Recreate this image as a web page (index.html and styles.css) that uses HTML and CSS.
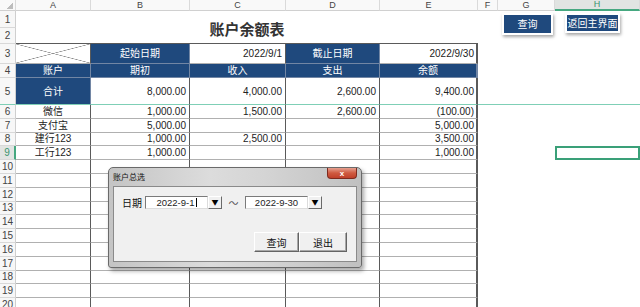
FILE: index.html
```html
<!DOCTYPE html>
<html lang="zh-CN">
  <head>
    <meta charset="UTF-8" />
    <meta name="viewport" content="width=device-width, initial-scale=1.0" />
    <title>账户余额表</title>
    <link rel="stylesheet" href="styles.css">
  </head>
  <body>
    <div class="book">
      <table class="sheet">
        <colgroup>
          <col class="w-hd"><col class="w-a"><col class="w-b"><col class="w-c"><col class="w-d"><col class="w-e"><col class="w-f"><col class="w-g"><col class="w-h">
        </colgroup>
        <tr class="r-head">
          <th class="corner"></th><th>A</th><th>B</th><th>C</th><th>D</th><th>E</th><th>F</th><th>G</th><th class="col-active">H</th>
        </tr>
        <tr class="r1"><th>1</th><td class="title" colspan="5" rowspan="2">账户余额表</td><td></td><td></td><td></td></tr>
        <tr class="r2"><th>2</th><td></td><td></td><td></td></tr>
        <tr class="r3"><th>3</th><td class="c diag"></td><td class="c blue">起始日期</td><td class="c num">2022/9/1</td><td class="c blue">截止日期</td><td class="c e num">2022/9/30</td><td></td><td></td><td></td></tr>
        <tr class="r4"><th>4</th><td class="c blue">账户</td><td class="c blue">期初</td><td class="c blue">收入</td><td class="c blue">支出</td><td class="c e blue">余额</td><td></td><td></td><td></td></tr>
        <tr class="r5"><th>5</th><td class="c blue">合计</td><td class="c num">8,000.00</td><td class="c num">4,000.00</td><td class="c num">2,600.00</td><td class="c e num">9,400.00</td><td></td><td></td><td></td></tr>
        <tr class="r"><th>6</th><td class="c ctr">微信</td><td class="c num">1,000.00</td><td class="c num">1,500.00</td><td class="c num">2,600.00</td><td class="c e num">(100.00)</td><td></td><td></td><td></td></tr>
        <tr class="r"><th>7</th><td class="c ctr">支付宝</td><td class="c num">5,000.00</td><td class="c num"></td><td class="c num"></td><td class="c e num">5,000.00</td><td></td><td></td><td></td></tr>
        <tr class="r"><th>8</th><td class="c ctr">建行123</td><td class="c num">1,000.00</td><td class="c num">2,500.00</td><td class="c num"></td><td class="c e num">3,500.00</td><td></td><td></td><td></td></tr>
        <tr class="r"><th class="row-active">9</th><td class="c ctr">工行123</td><td class="c num">1,000.00</td><td class="c num"></td><td class="c num"></td><td class="c e num">1,000.00</td><td></td><td></td><td class="sel"></td></tr>
        <tr class="r"><th>10</th><td class="c"></td><td class="c"></td><td class="c"></td><td class="c"></td><td class="c e"></td><td></td><td></td><td></td></tr>
        <tr class="r"><th>11</th><td class="c"></td><td class="c"></td><td class="c"></td><td class="c"></td><td class="c e"></td><td></td><td></td><td></td></tr>
        <tr class="r"><th>12</th><td class="c"></td><td class="c"></td><td class="c"></td><td class="c"></td><td class="c e"></td><td></td><td></td><td></td></tr>
        <tr class="r"><th>13</th><td class="c"></td><td class="c"></td><td class="c"></td><td class="c"></td><td class="c e"></td><td></td><td></td><td></td></tr>
        <tr class="r"><th>14</th><td class="c"></td><td class="c"></td><td class="c"></td><td class="c"></td><td class="c e"></td><td></td><td></td><td></td></tr>
        <tr class="r"><th>15</th><td class="c"></td><td class="c"></td><td class="c"></td><td class="c"></td><td class="c e"></td><td></td><td></td><td></td></tr>
        <tr class="r"><th>16</th><td class="c"></td><td class="c"></td><td class="c"></td><td class="c"></td><td class="c e"></td><td></td><td></td><td></td></tr>
        <tr class="r"><th>17</th><td class="c"></td><td class="c"></td><td class="c"></td><td class="c"></td><td class="c e"></td><td></td><td></td><td></td></tr>
        <tr class="r"><th>18</th><td class="c"></td><td class="c"></td><td class="c"></td><td class="c"></td><td class="c e"></td><td></td><td></td><td></td></tr>
        <tr class="r"><th>19</th><td class="c"></td><td class="c"></td><td class="c"></td><td class="c"></td><td class="c e"></td><td></td><td></td><td></td></tr>
        <tr class="r"><th>20</th><td class="c"></td><td class="c"></td><td class="c"></td><td class="c"></td><td class="c e"></td><td></td><td></td><td></td></tr>
      </table>

      <button class="sheet-btn btn-query">查询</button>
      <button class="sheet-btn btn-home">返回主界面</button>

      <div class="dialog">
        <div class="dlg-title">
          <span>账户总选</span>
          <button class="dlg-close">x</button>
        </div>
        <div class="dlg-body">
          <div class="date-row">
            <span class="lbl">日期</span>
            <div class="combo">
              <span class="combo-text">2022-9-1<i class="caret"></i></span>
              <span class="combo-btn">▼</span>
            </div>
            <span class="tilde">～</span>
            <div class="combo">
              <span class="combo-text">2022-9-30</span>
              <span class="combo-btn">▼</span>
            </div>
          </div>
          <div class="dlg-actions">
            <button class="win-btn q">查询</button>
            <button class="win-btn x">退出</button>
          </div>
        </div>
      </div>
    </div>
  </body>
</html>
```

FILE: styles.css
```css
body {
  margin: 0;
  background: #fff;
  font-family: "Liberation Sans", "Noto Sans CJK SC", sans-serif;
  overflow: hidden;
}
.book {
  position: relative;
  width: 640px;
  height: 307px;
  overflow: hidden;
}
.sheet {
  table-layout: fixed;
  width: 640px;
  border-collapse: separate;
  border-spacing: 0;
  font-size: 10px;
  color: #222;
}
.w-hd { width: 16px; }
.w-a { width: 75px; }
.w-b { width: 99px; }
.w-c { width: 96px; }
.w-d { width: 94px; }
.w-e { width: 98px; }
.w-f { width: 20px; }
.w-g { width: 57px; }
.w-h { width: 85px; }
.sheet td,
.sheet th {
  box-sizing: border-box;
  padding: 0;
  line-height: 11px;
  white-space: nowrap;
  overflow: hidden;
  font-weight: normal;
}
.sheet th {
  background: #f7f7f7;
  color: #444;
  border-right: 1px solid #cfcfcf;
  border-bottom: 1px solid #d8d8d8;
  text-align: center;
}
.r-head { height: 10px; }
.r-head th {
  font-size: 9px;
  line-height: 9px;
  background: #f9f9f9;
  border-bottom: 1px solid #d0d0d0;
  border-right: 1px solid #dadada;
}
.r-head th.corner {
  background: #f9f9f9 linear-gradient(to top left, #bdbdbd 50%, transparent 50%) no-repeat right 2px bottom 1px / 7px 6px;
}
.r-head th.col-active {
  background: #e1e4e2;
  color: #3a9470;
  border-bottom: 2px solid #46a880;
}
.sheet th.row-active {
  background: #e1e4e2;
  color: #3a9470;
  border-right: 2px solid #46a880;
}
.r1 { height: 17px; }
.r2 { height: 16px; }
.r3 { height: 20px; }
.r4 { height: 14px; }
.r5 { height: 27px; }
.r { height: 13.8px; }

.sheet .title {
  text-align: center;
  font-family: "Noto Sans CJK SC", sans-serif;
  font-size: 15px;
  font-weight: bold;
  color: #333;
  padding-top: 3px;
  border-bottom: 1px solid #5a5a5a;
}
.c {
  border-right: 1px solid #5a5a5a;
  border-bottom: 1px solid #b0b0b0;
}
.c.e {
  border-right-width: 2px;
}
.sheet .num {
  text-align: right;
  padding-right: 3px;
}
.sheet .e.num {
  padding-right: 2px;
}
.ctr {
  text-align: center;
}
.blue {
  background: #1f497d;
  color: #fff;
  text-align: center;
  border-right-color: #7286a4;
  border-bottom-color: #7286a4;
}
.diag {
  background:
    linear-gradient(to top right, transparent calc(50% - 0.6px), #8a8a8a 50%, transparent calc(50% + 0.6px)),
    linear-gradient(to bottom right, transparent calc(50% - 0.6px), #8a8a8a 50%, transparent calc(50% + 0.6px));
}
.r5 > td,
.r5 > th {
  border-bottom: 1px solid #7fcfb6;
}
.r5 > td.blue {
  border-bottom-color: #7fcfb6;
}
.sel {
  box-shadow: inset 0 0 0 2px #3aa078;
}

.sheet-btn {
  position: absolute;
  box-sizing: border-box;
  padding: 0;
  border: 2px solid #fff;
  background: #1f497d;
  color: #fff;
  font-family: "Noto Sans CJK SC", sans-serif;
  font-size: 10px;
  line-height: 1;
  box-shadow: 1px 2px 3px rgba(0, 0, 0, 0.35);
}
.btn-query {
  left: 502px;
  top: 13px;
  width: 51px;
  height: 22px;
}
.btn-home {
  left: 565px;
  top: 13px;
  width: 55px;
  height: 20px;
}

.dialog {
  position: absolute;
  left: 108px;
  top: 167px;
  width: 254px;
  height: 101px;
  box-sizing: border-box;
  display: flex;
  flex-direction: column;
  padding: 0 4px 5px 4px;
  border: 1px solid #6a6a6a;
  border-radius: 5px 5px 3px 3px;
  background: linear-gradient(to right, #c4c4c4, #dcdcdc 40%, #d4d4d4 62%, #c0c0c0);
  box-shadow: 2px 3px 4px rgba(0, 0, 0, 0.35);
  font-family: "Noto Sans CJK SC", sans-serif;
}
.dlg-title {
  height: 18px;
  display: flex;
  justify-content: space-between;
}
.dlg-title span {
  font-size: 8px;
  line-height: 18px;
  color: #111;
}
.dlg-close {
  width: 30px;
  height: 11px;
  padding: 0;
  border: 1px solid #7d2a1e;
  border-top: none;
  border-radius: 0 0 4px 4px;
  background: linear-gradient(#e6a090, #cf5a40 50%, #c0402a);
  color: #fff;
  font-family: "Liberation Sans", sans-serif;
  font-size: 8px;
  font-weight: bold;
  line-height: 9px;
}
.dlg-body {
  flex: 1;
  background: #f0f0f0;
  border: 1px solid #8a8a8a;
  padding: 9px 9px 0 8px;
}
.date-row {
  display: flex;
  align-items: center;
  height: 13px;
}
.lbl {
  width: 23px;
  font-size: 10px;
  color: #111;
}
.combo {
  display: flex;
}
.combo-text {
  box-sizing: border-box;
  width: 63px;
  height: 13px;
  background: #fff;
  border: 1px solid;
  border-color: #7a7a7a #dcdcdc #dcdcdc #7a7a7a;
  font-family: "Liberation Sans", sans-serif;
  font-size: 9.5px;
  line-height: 11px;
  text-align: center;
  color: #222;
}
.caret {
  display: inline-block;
  width: 1px;
  height: 9px;
  margin-left: 1px;
  background: #000;
  vertical-align: -1px;
}
.combo-btn {
  box-sizing: border-box;
  width: 14px;
  height: 13px;
  background: #f0f0f0;
  border: 1px solid;
  border-color: #fff #6a6a6a #6a6a6a #fff;
  font-size: 7px;
  line-height: 11px;
  text-align: center;
  color: #000;
}
.tilde {
  width: 23px;
  text-align: center;
  font-size: 10px;
  color: #555;
}
.dlg-actions {
  display: flex;
  justify-content: flex-end;
  margin-top: 23px;
}
.win-btn {
  box-sizing: border-box;
  height: 20px;
  padding: 0;
  background: #f0f0f0;
  border: 1px solid;
  border-color: #fff #646464 #646464 #fff;
  box-shadow: inset -1px -1px #a8a8a8;
  font-family: "Noto Sans CJK SC", sans-serif;
  font-size: 10px;
  color: #111;
}
.win-btn.q { width: 45px; }
.win-btn.x { width: 48px; }
```
